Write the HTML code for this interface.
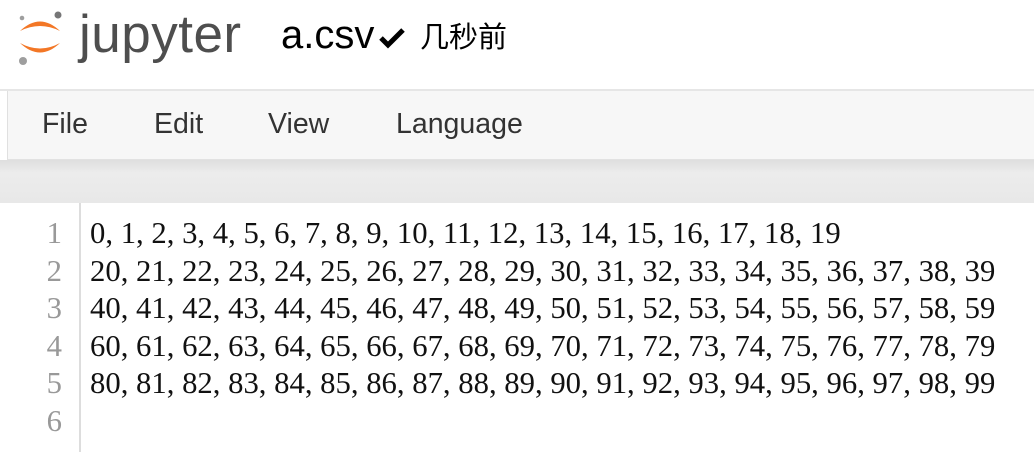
<!DOCTYPE html>
<html><head><meta charset="utf-8"><style>
body{margin:0;width:1034px;height:452px;overflow:hidden;background:#fff;font-family:"Liberation Sans","Noto Sans CJK SC",sans-serif;position:relative}
.abs{position:absolute;line-height:1}
#hdr{left:0;top:0;width:1034px;height:90px;background:#fff}
#jt{left:79px;top:8px;font-size:53px;color:#4e4e4e;letter-spacing:0.5px}
#fn{left:281px;top:15px;font-size:40px;color:#000}
#ago{left:420px;top:21px;font-size:29px;color:#000;font-family:"Noto Sans CJK SC",sans-serif}
#line{left:0;top:89px;width:1034px;height:2px;background:#e6e6e6}
#menu{left:7px;top:91px;width:1027px;height:68px;background:#f7f7f7;border-left:1px solid #e0e0e0;border-bottom:1px solid #e2e2e2}
.mi{position:absolute;top:19px;font-size:28.5px;color:#333;line-height:1}
#band{left:0;top:160px;width:1034px;height:43px;background:linear-gradient(#dedede,#ececec 30%,#e8e8e8)}
#ed{left:6px;top:203px;width:1028px;height:249px;background:#fff}
#gut{left:79px;top:203px;width:2px;height:249px;background:#ddd}
.code{position:absolute;font-family:"Liberation Serif",serif;font-size:30.7px;line-height:37.5px;white-space:pre}
#nums{left:0;top:215px;width:62px;text-align:right;color:#999}
#txt{left:90px;top:215px;color:#111}
</style></head><body>
<div id="hdr" class="abs"></div>
<svg class="abs" style="left:16px;top:6px" width="50" height="62" viewBox="0 0 50 62">
<path d="M4 25 Q24 6 44 25 Q24 15 4 25Z" fill="#f37726"/>
<path d="M4 37 Q24 56 44 37 Q24 48 4 37Z" fill="#f37726"/>
<circle cx="42" cy="9" r="3.5" fill="#767677"/>
<circle cx="6" cy="12" r="2.3" fill="#9e9e9e"/>
<circle cx="7" cy="55" r="4" fill="#9e9e9e"/>
</svg>
<div id="jt" class="abs">jupyter</div>
<div id="fn" class="abs">a.csv</div>
<svg class="abs" style="left:378px;top:27px" width="28" height="22" viewBox="0 0 28 22"><path d="M3 11 L10 18 L25 3" stroke="#000" stroke-width="5" fill="none"/></svg>
<div id="ago" class="abs">几秒前</div>
<div id="line" class="abs"></div>
<div id="menu" class="abs">
<span class="mi" style="left:34px">File</span>
<span class="mi" style="left:146px">Edit</span>
<span class="mi" style="left:260px">View</span>
<span class="mi" style="left:388px">Language</span>
</div>
<div id="band" class="abs"></div>
<div id="ed" class="abs"></div>
<div id="gut" class="abs"></div>
<div id="nums" class="code">1
2
3
4
5
6</div>
<div id="txt" class="code">0, 1, 2, 3, 4, 5, 6, 7, 8, 9, 10, 11, 12, 13, 14, 15, 16, 17, 18, 19
20, 21, 22, 23, 24, 25, 26, 27, 28, 29, 30, 31, 32, 33, 34, 35, 36, 37, 38, 39
40, 41, 42, 43, 44, 45, 46, 47, 48, 49, 50, 51, 52, 53, 54, 55, 56, 57, 58, 59
60, 61, 62, 63, 64, 65, 66, 67, 68, 69, 70, 71, 72, 73, 74, 75, 76, 77, 78, 79
80, 81, 82, 83, 84, 85, 86, 87, 88, 89, 90, 91, 92, 93, 94, 95, 96, 97, 98, 99</div>
</body></html>
